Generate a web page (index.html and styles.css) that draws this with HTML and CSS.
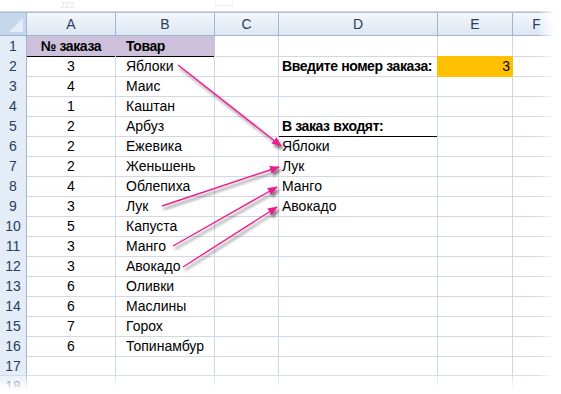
FILE: index.html
```html
<!DOCTYPE html>
<html lang="ru">
<head>
<meta charset="utf-8">
<link rel="stylesheet" href="styles.css">
</head>
<body>
<div class="page">
  <div class="topbar"><span class="namebox">J22</span><span class="fx"></span></div>
  <div class="sheet">
    <div class="row head">
      <div class="corner"><span class="tri"></span></div>
      <div class="ch">A</div><div class="ch">B</div><div class="ch">C</div><div class="ch">D</div><div class="ch">E</div><div class="ch">F</div>
    </div>
    <div class="row"><div class="rh">1</div><div class="c num hdr bold">№ заказа</div><div class="c txt hdr bold">Товар</div><div class="c"></div><div class="c"></div><div class="c e-top"></div><div class="c"></div></div>
    <div class="row"><div class="rh">2</div><div class="c num">3</div><div class="c txt">Яблоки</div><div class="c"></div><div class="c dtxt bold d-or">Введите номер заказа:</div><div class="c input">3</div><div class="c"></div></div>
    <div class="row"><div class="rh">3</div><div class="c num">4</div><div class="c txt">Маис</div><div class="c"></div><div class="c"></div><div class="c"></div><div class="c"></div></div>
    <div class="row"><div class="rh">4</div><div class="c num">1</div><div class="c txt">Каштан</div><div class="c"></div><div class="c"></div><div class="c"></div><div class="c"></div></div>
    <div class="row"><div class="rh">5</div><div class="c num">2</div><div class="c txt">Арбуз</div><div class="c"></div><div class="c dtxt bold under">В заказ входят:</div><div class="c"></div><div class="c"></div></div>
    <div class="row"><div class="rh">6</div><div class="c num">2</div><div class="c txt">Ежевика</div><div class="c"></div><div class="c dtxt">Яблоки</div><div class="c"></div><div class="c"></div></div>
    <div class="row"><div class="rh">7</div><div class="c num">2</div><div class="c txt">Женьшень</div><div class="c"></div><div class="c dtxt">Лук</div><div class="c"></div><div class="c"></div></div>
    <div class="row"><div class="rh">8</div><div class="c num">4</div><div class="c txt">Облепиха</div><div class="c"></div><div class="c dtxt">Манго</div><div class="c"></div><div class="c"></div></div>
    <div class="row"><div class="rh">9</div><div class="c num">3</div><div class="c txt">Лук</div><div class="c"></div><div class="c dtxt">Авокадо</div><div class="c"></div><div class="c"></div></div>
    <div class="row"><div class="rh">10</div><div class="c num">5</div><div class="c txt">Капуста</div><div class="c"></div><div class="c"></div><div class="c"></div><div class="c"></div></div>
    <div class="row"><div class="rh">11</div><div class="c num">3</div><div class="c txt">Манго</div><div class="c"></div><div class="c"></div><div class="c"></div><div class="c"></div></div>
    <div class="row"><div class="rh">12</div><div class="c num">3</div><div class="c txt">Авокадо</div><div class="c"></div><div class="c"></div><div class="c"></div><div class="c"></div></div>
    <div class="row"><div class="rh">13</div><div class="c num">6</div><div class="c txt">Оливки</div><div class="c"></div><div class="c"></div><div class="c"></div><div class="c"></div></div>
    <div class="row"><div class="rh">14</div><div class="c num">6</div><div class="c txt">Маслины</div><div class="c"></div><div class="c"></div><div class="c"></div><div class="c"></div></div>
    <div class="row"><div class="rh">15</div><div class="c num">7</div><div class="c txt">Горох</div><div class="c"></div><div class="c"></div><div class="c"></div><div class="c"></div></div>
    <div class="row"><div class="rh">16</div><div class="c num">6</div><div class="c txt">Топинамбур</div><div class="c"></div><div class="c"></div><div class="c"></div><div class="c"></div></div>
    <div class="row"><div class="rh">17</div><div class="c"></div><div class="c"></div><div class="c"></div><div class="c"></div><div class="c"></div><div class="c"></div></div>
    <div class="row"><div class="rh">18</div><div class="c"></div><div class="c"></div><div class="c"></div><div class="c"></div><div class="c"></div><div class="c"></div></div>
  </div>

  <svg class="arrows" width="561" height="394" viewBox="0 0 561 394">
    <defs>
      <filter id="sh" x="-20%" y="-20%" width="140%" height="140%">
        <feDropShadow dx="2" dy="3" stdDeviation="1.4" flood-color="#000" flood-opacity="0.55"/>
      </filter>
      <marker id="ah" markerWidth="10" markerHeight="8" refX="9" refY="4" orient="auto" markerUnits="userSpaceOnUse">
        <path d="M0,0 L10,4 L0,8 Z" fill="#ec1f8e"/>
      </marker>
    </defs>
    <g filter="url(#sh)" stroke="#ec1f8e" stroke-width="1.4" fill="none">
      <line x1="178" y1="65" x2="281" y2="146" marker-end="url(#ah)"/>
      <line x1="162" y1="206" x2="279" y2="167" marker-end="url(#ah)"/>
      <line x1="173" y1="246" x2="277" y2="187" marker-end="url(#ah)"/>
      <line x1="183" y1="267" x2="277" y2="207" marker-end="url(#ah)"/>
    </g>
  </svg>
  <div class="fade-right"></div>
  <div class="fade-bottom"></div>
</div>
</body>
</html>
```

FILE: styles.css
```css
* { box-sizing: border-box; }
html, body { margin: 0; padding: 0; background: #fff; }
.page {
  position: relative;
  width: 561px;
  height: 394px;
  overflow: hidden;
  font-family: "Liberation Sans", Arial, sans-serif;
  font-size: 14px;
  color: #000;
}
.topbar {
  height: 12px;
  border-bottom: 1px solid #cfd8e3;
  display: flex;
  align-items: flex-start;
  padding-left: 60px;
  gap: 140px;
}
.namebox { color: #e4e4e4; font-size: 9px; line-height: 10px; }
.fx { width: 18px; height: 6px; border: 1px solid #f0f0f0; border-top: 0; }
.sheet { display: flex; flex-direction: column; }
.row {
  display: grid;
  grid-template-columns: 27px 89px 99px 64px 159px 75px 48px;
  height: 20px;
}
.row.head {
  height: 24px;
  border-top: 1px solid #a9bfd6;
  background: linear-gradient(#f4f7fb, #dce5f1);
}
.corner {
  position: relative;
  background: #c6d7ec;
  border-right: 1px solid #9eb6ce;
  border-bottom: 1px solid #9eb6ce;
}
.tri {
  position: absolute;
  right: 3px;
  bottom: 3px;
  width: 0; height: 0;
  border-left: 14px solid transparent;
  border-bottom: 14px solid #e6edf6;
}
.ch {
  border-right: 1px solid #9eb6ce;
  border-bottom: 1px solid #9eb6ce;
  display: flex;
  align-items: center;
  justify-content: center;
  color: #27405a;
  font-size: 14px;
}
.rh {
  background: #e4ecf7;
  border-right: 1px solid #9eb6ce;
  border-bottom: 1px solid #c3d1e1;
  display: flex;
  align-items: center;
  justify-content: center;
  color: #27405a;
  font-size: 14px;
}
.c {
  border-right: 1px solid #d0d7e5;
  border-bottom: 1px solid #d0d7e5;
  display: flex;
  align-items: center;
  white-space: nowrap;
  line-height: 19px;
  padding-top: 1px;
}
.num { justify-content: center; }
.txt { padding-left: 10px; }
.dtxt { padding-left: 3px; overflow: visible; }
.bold { font-weight: bold; letter-spacing: -0.4px; }
.hdr { background: #ccc0da; border-bottom-color: #000; border-right-color: #ccc0da; }
.under { border-bottom-color: #000; }
.input {
  background: #ffc000;
  border-right-color: #ffc000;
  border-bottom-color: #ffc000;
  justify-content: flex-end;
  padding-right: 2px;
}
.d-or { border-right-color: #ffc000; }
.e-top { border-bottom-color: #ffc000; }
.arrows { position: absolute; left: 0; top: 0; pointer-events: none; }
.fade-right {
  position: absolute;
  top: 0; right: 0;
  width: 24px; height: 394px;
  background: linear-gradient(to right, rgba(255,255,255,0), #fff 75%);
}
.fade-bottom {
  position: absolute;
  left: 0; bottom: 0;
  width: 561px; height: 22px;
  background: linear-gradient(to bottom, rgba(255,255,255,0), #fff 80%);
}
```
